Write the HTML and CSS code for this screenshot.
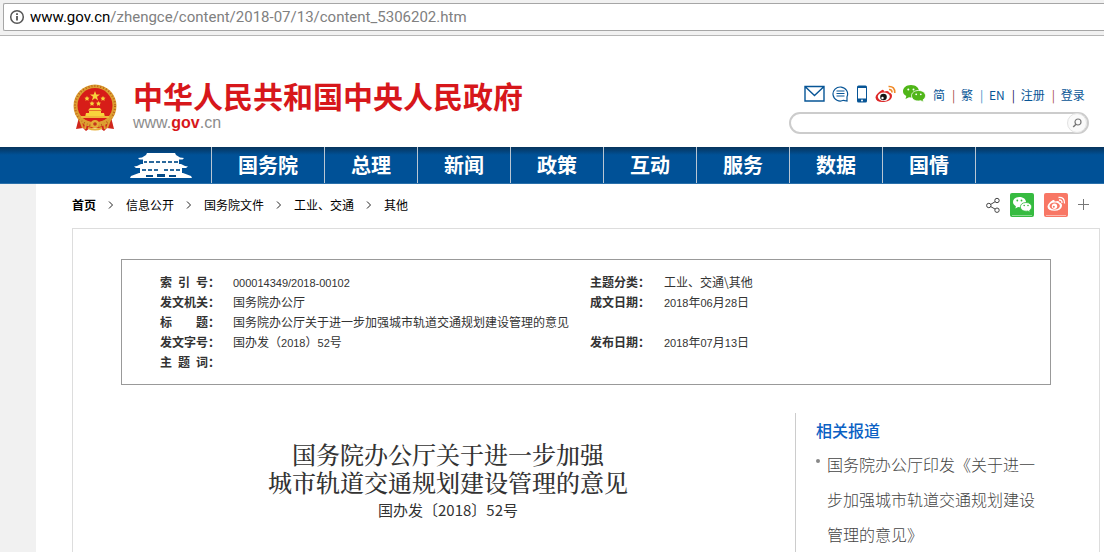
FILE: index.html
```html
<!DOCTYPE html>
<html lang="zh-CN">
<head>
<meta charset="utf-8">
<title>国务院办公厅关于进一步加强城市轨道交通规划建设管理的意见</title>
<link rel="stylesheet" href="styles.css">
</head>
<body>
<div class="toolbar">
  <div class="address">
    <svg width="16" height="16" viewBox="0 0 16 16" aria-hidden="true"><circle cx="8" cy="8" r="6.3" fill="none" stroke="#555" stroke-width="1.5"/><path d="M7.1 7h1.8v4.5H7.1zM7.1 4.3h1.8V6H7.1z" fill="#555"/></svg>
    <span class="url"><span class="host">www.gov.cn</span>/zhengce/content/2018-07/13/content_5306202.htm</span>
  </div>
</div>

<header class="header">
  <a class="brand" href="#">
    <svg class="emblem" width="46" height="48" viewBox="0 0 46 48" aria-hidden="true">
      <path d="M7 33L4 45l7-1 3 3 4-3h10l4 3 3-3 7 1-3-12z" fill="#d0251c"/>
      <circle cx="23" cy="22" r="21.5" fill="#dda032"/>
      <circle cx="23" cy="22" r="20" fill="none" stroke="#b9601b" stroke-width="2" stroke-dasharray="1 2"/>
      <circle cx="23" cy="21.500" r="17.500" fill="#d71d18"/>
      <path d="M23 7l1.300 3.500H28l-3 2.300 1.100 3.700-3.100-2.200-3.100 2.200 1.100-3.700-3-2.300h3.700z" fill="#f8d33c"/>
      <g fill="#f8d33c"><path d="M15 12l.8 1.500 1.700.2-1.200 1.200.3 1.800-1.600-.8-1.600.8.3-1.800-1.200-1.200 1.700-.2z"/><path d="M31 12l.8 1.500 1.700.2-1.200 1.200.3 1.800-1.600-.8-1.600.8.3-1.800-1.200-1.200 1.700-.2z"/><path d="M20 17l.8 1.500 1.700.2-1.200 1.200.3 1.800-1.600-.8-1.600.8.3-1.800-1.200-1.200 1.700-.2z"/><path d="M26.500 17l.8 1.500 1.700.2-1.200 1.200.3 1.800-1.600-.8-1.600.8.3-1.800-1.200-1.200 1.700-.2z"/>
      <path d="M18 24h10l2 2.500H16zM17 27h12v2h3l1 4H13l1-4h3z"/></g>
      <path d="M9 32h28v2H9z" fill="#f0b63a"/>
      <path d="M6 33q17 12 34 0M8 36l3 8M38 36l-3 8M14 39l-1 6M32 39l1 6" fill="none" stroke="#dda032" stroke-width="2"/>
      <circle cx="23" cy="40" r="4" fill="#e6ae37"/><circle cx="23" cy="40" r="1.800" fill="#c2371d"/>
      <path d="M16 44q7 3 14 0" fill="none" stroke="#e6ae37" stroke-width="2"/>
    </svg>
    <span class="brand-text">
      <span class="brand-name">中华人民共和国中央人民政府</span>
      <span class="brand-url">www.<b>gov</b>.cn</span>
    </span>
  </a>
  <div class="tools">
    <div class="quick">
      <a href="#" aria-label="邮箱"><svg width="21" height="18" viewBox="0 0 21 18"><path d="M1 1.500h19v14.500H1zM1.500 2l9 8.500 9-8.500" fill="none" stroke="#075596" stroke-width="1.400"/></svg></a>
      <a href="#" aria-label="留言"><svg width="17" height="18" viewBox="0 0 17 18"><path d="M11.500 15.300A7.300 7 0 1 1 15 11.800V16z" fill="none" stroke="#075596" stroke-width="1.200"/><path d="M4.500 6h8M4.500 8.500h8M4.500 11h8" stroke="#075596"/></svg></a>
      <a href="#" aria-label="客户端"><svg width="12" height="18" viewBox="0 0 12 18"><rect x="1" y=".5" width="10" height="17" rx="1.500" fill="#075596"/><path d="M2 3h8v10.500H2z" fill="#fff"/><circle cx="6" cy="15.500" r="1" fill="#fff"/></svg></a>
      <a href="#" aria-label="微博"><svg width="21" height="18" viewBox="0 0 21 18"><path d="M7 5Q9 4.300 9 6.500q5-1.500 5 1 3 .5 3 3.500 0 5-8 6Q1 17.500.5 12.500.5 9 7 5z" fill="#dd2727"/><ellipse cx="8.800" cy="11.700" rx="6" ry="4.200" fill="#fff"/><circle cx="8.500" cy="12" r="3.300" fill="#151515"/><circle cx="7.500" cy="13" r="1.200" fill="#fff"/><path d="M13.500 1.500q6.500-.5 6.300 6.500M14 4.500q3-.2 3 3" fill="none" stroke="#f08a28" stroke-width="1.600"/></svg></a>
      <a href="#" aria-label="微信"><svg width="23" height="18" viewBox="0 0 23 18"><path d="M8 0c5 0 8 3 8 6.300S13 12.600 8 12.600l-2-.3L2.500 14l.8-3C1 10 0 8.200 0 6.300 0 3 3 0 8 0z" fill="#4fb618"/><path d="M15.500 5.500c4.300 0 7 2.400 7 5.200 0 1.800-1 3.200-2.500 4.100l.5 2.400-2.700-1.500c-6 1.200-9.300-1.800-9.300-5 0-2.800 2.700-5.200 7-5.200z" fill="#4fb618" stroke="#fff" stroke-width=".8"/><g fill="#fff"><circle cx="5.300" cy="4.500" r="1"/><circle cx="10.500" cy="4.500" r="1"/><circle cx="13.200" cy="9.300" r=".9"/><circle cx="17.800" cy="9.300" r=".9"/></g></svg></a>
      <div class="langs">
        <a href="#">简</a><span class="bar warm">|</span><a href="#">繁</a><span class="bar cool">|</span><a href="#">EN</a><span class="bar">|</span><a href="#">注册</a><span class="bar warm">|</span><a href="#">登录</a>
      </div>
    </div>
    <form class="search">
      <input type="text" aria-label="搜索">
      <button type="button" aria-label="搜索"><svg width="10" height="10" viewBox="0 0 10 10"><circle cx="6" cy="4" r="3" fill="none" stroke="#777" stroke-width="1.200"/><path d="M4 6.200L1.200 9" stroke="#777" stroke-width="1.500"/></svg></button>
    </form>
  </div>
</header>

<nav class="nav">
  <a class="gate" href="#" aria-label="中国政府网">
    <svg width="62" height="26" viewBox="0 0 62 26"><g fill="#fff"><path d="M17 0h28l1 2 4 2.500 4 .5-1.500 1.500h-43L8 5l4-.5L16 2z"/><path d="M13 6h36v5H13z"/><path d="M11 11h40l4 2 3 .500-2 1.500H6l-2-1.500 3-.500z"/><path d="M10 15h42v5H10z"/><path d="M9 20h44l8 3 1 2H0l1-2z"/></g><path d="M14 8h3v2h-3zM19 8h5v2h-5zM26 8h4v2h-4zM32 8h4v2h-4zM38 8h4v2h-4zM44 8h4v2h-4zM12 16h4v2h-4zM18 16h4v2h-4zM24 16h4v2h-4zM34 16h4v2h-4zM40 16h4v2h-4zM46 16h4v2h-4z" fill="#2b699c"/><path d="M16 22h7v2h-7zM27 21h8v3h-8zM39 22h7v2h-7z" fill="#034a86"/></svg>
  </a>
  <a href="#">国务院</a><a href="#">总理</a><a href="#">新闻</a><a href="#">政策</a><a href="#">互动</a><a href="#">服务</a><a href="#">数据</a><a href="#">国情</a>
</nav>

<main class="page">
  <div class="path-row">
    <div class="crumbs">
      <a class="home" href="#">首页</a>
      <svg width="6" height="8" viewBox="0 0 6 8"><path d="M1 .5L4.500 4 1 7.500" fill="none" stroke="#222"/></svg>
      <a href="#">信息公开</a>
      <svg width="6" height="8" viewBox="0 0 6 8"><path d="M1 .5L4.500 4 1 7.500" fill="none" stroke="#222"/></svg>
      <a href="#">国务院文件</a>
      <svg width="6" height="8" viewBox="0 0 6 8"><path d="M1 .5L4.500 4 1 7.500" fill="none" stroke="#222"/></svg>
      <a href="#">工业、交通</a>
      <svg width="6" height="8" viewBox="0 0 6 8"><path d="M1 .5L4.500 4 1 7.500" fill="none" stroke="#222"/></svg>
      <a href="#">其他</a>
    </div>
    <div class="share">
      <a href="#" aria-label="分享"><svg width="14" height="16" viewBox="0 0 14 16"><g fill="none" stroke="#444"><circle cx="2.800" cy="8.500" r="2.200"/><circle cx="11" cy="3.500" r="2.200"/><circle cx="11" cy="13.200" r="2.200"/><path d="M4.700 7.400l4.400-2.700M4.700 9.600l4.400 2.500"/></g></svg></a>
      <a href="#" aria-label="分享到微信"><svg width="24" height="24" viewBox="0 0 24 24"><rect width="24" height="24" rx="2" fill="#36bb40"/><path d="M2 22.500h20" stroke="#8bd890"/><path d="M9.500 4c4 0 6.500 2.500 6.500 5s-2.500 5.200-6.500 5.200L8 14l-2.600 1.500.5-2.300C4 12.200 3 10.700 3 9c0-2.500 2.500-5 6.500-5z" fill="#fff"/><path d="M16 9.500c3.500 0 5.700 2 5.700 4.300 0 1.400-.8 2.600-2 3.400l.4 2-2.200-1.200c-4.800.9-7.500-1.600-7.500-4.200 0-2.300 2.100-4.300 5.600-4.300z" fill="#fff" stroke="#36bb40" stroke-width=".8"/><g fill="#36bb40"><circle cx="7.300" cy="7.500" r=".9"/><circle cx="11.500" cy="7.500" r=".9"/><circle cx="14.200" cy="12.500" r=".8"/><circle cx="18" cy="12.500" r=".8"/></g></svg></a>
      <a href="#" aria-label="分享到微博"><svg width="24" height="24" viewBox="0 0 24 24"><rect width="24" height="24" rx="2" fill="#f87765"/><path d="M2 22.500h20" stroke="#fbb8ae"/><path d="M9 7q2-.5 1.700 1.500 4.800-1.500 4.800 1 2.800.8 2.500 3.500-.8 4.500-7.500 4.800-6.800 0-7-4.300Q4 10 9 7z" fill="#fff"/><ellipse cx="10.700" cy="13" rx="5.200" ry="3.500" fill="#f87765"/><circle cx="10.500" cy="13.200" r="2.700" fill="#fff"/><circle cx="9.800" cy="13.800" r="1" fill="#f87765"/><path d="M14.500 4.500q6.500-.5 6 6M15 7q3.200-.2 3 3" fill="none" stroke="#fff" stroke-width="1.300"/></svg></a>
      <a href="#" aria-label="更多"><svg width="11" height="24" viewBox="0 0 11 24"><path d="M5.500 6v11M0 11.500h11" stroke="#777"/></svg></a>
    </div>
  </div>

  <div class="sheet">
    <table class="info">
      <tr><th scope="row"><span class="label">索 引 号</span>：</th><td><span class="num">000014349/2018-00102</span></td><th scope="row"><span class="label">主题分类</span>：</th><td>工业、交通\其他</td></tr>
      <tr><th scope="row"><span class="label">发文机关</span>：</th><td>国务院办公厅</td><th scope="row"><span class="label">成文日期</span>：</th><td><span class="num">2018</span>年<span class="num">06</span>月<span class="num">28</span>日</td></tr>
      <tr><th scope="row"><span class="label">标 题</span>：</th><td colspan="3">国务院办公厅关于进一步加强城市轨道交通规划建设管理的意见</td></tr>
      <tr><th scope="row"><span class="label">发文字号</span>：</th><td>国办发（<span class="num">2018</span>）<span class="num">52</span>号</td><th scope="row"><span class="label">发布日期</span>：</th><td><span class="num">2018</span>年<span class="num">07</span>月<span class="num">13</span>日</td></tr>
      <tr><th scope="row"><span class="label">主 题 词</span>：</th><td colspan="3"></td></tr>
    </table>
    <div class="columns">
      <article class="article">
        <h1>国务院办公厅关于进一步加强<br>城市轨道交通规划建设管理的意见</h1>
        <p>国办发〔2018〕52号</p>
      </article>
      <aside class="related">
        <h2>相关报道</h2>
        <ul><li><a href="#">国务院办公厅印发《关于进一步加强城市轨道交通规划建设管理的意见》</a></li></ul>
      </aside>
    </div>
  </div>
</main>
</body>
</html>
```
FILE: styles.css
```css
* { box-sizing: border-box; }

body {
  margin: 0;
  min-height: 100vh;
  display: flex;
  flex-direction: column;
  background: #fff;
  color: #333;
  font: 12px/20px "Noto Sans CJK SC", sans-serif;
}

a { color: inherit; text-decoration: none; }
svg { display: block; flex: none; }

.toolbar {
  height: 36px;
  padding: 3px 0 0 3px;
  background: #f1f1f1;
  border-bottom: 1px solid #b6b6b6;
}
.address {
  display: flex;
  align-items: center;
  gap: 5px;
  height: 28px;
  padding-left: 5px;
  background: #fff;
  border: 1px solid #a6a6a6;
  border-right: 0;
  border-radius: 2px 0 0 2px;
}
.url { font: 15px/20px Roboto, "Open Sans", sans-serif; color: #808080; }
.host { color: #000; }

.header {
  display: flex;
  justify-content: space-between;
  height: 111px;
  padding: 44px 15px 0 72px;
}
.brand { display: flex; gap: 15px; }
.emblem { margin-top: 4px; }
.brand-text { display: flex; flex-direction: column; }
.brand-name { font-size: 30px; line-height: 30px; font-weight: 700; color: #d7171b; }
.brand-url { font: 16px/26px "Liberation Sans", Arial, sans-serif; color: #8c8c8c; }
.brand-url b { color: #d7171b; }

.tools { width: 300px; padding-top: 4px; }
.quick { display: flex; align-items: center; gap: 7px; height: 20px; padding-left: 15px; color: #075596; }
.langs { display: flex; gap: 7px; height: 20px; line-height: 22px; }
.bar { width: 2px; color: #17174f; }
.warm { color: #a34b43; }
.cool { color: #3c90c8; }
.search {
  display: flex;
  align-items: center;
  height: 22px;
  margin: 8px 0 0;
  border: 2px solid #ccc;
  border-radius: 11px;
}
.search input { flex: 1; min-width: 0; height: 16px; margin-left: 10px; padding: 0; border: 0; outline: 0; background: none; }
.search button {
  display: grid;
  place-items: center;
  width: 20px;
  height: 20px;
  padding: 0;
  border: 1px solid #e2e2e2;
  border-radius: 50%;
  background: #fafafa;
}

.nav {
  display: flex;
  height: 37px;
  padding-left: 130px;
  background: linear-gradient(#07345c, #005197 8px);
  border-bottom: 1px solid #2a70aa;
}
.nav a {
  padding: 0 26px;
  border-right: 1px solid #b9c6d3;
  color: #fff;
  font-size: 20px;
  line-height: 36px;
  font-weight: 700;
}
.nav .gate { padding: 6px 19px 0 0; }

.page { flex: 1; display: flex; flex-direction: column; padding: 0 4px 0 36px; border-left: 36px solid #f1f1f1; }
.path-row { display: flex; justify-content: space-between; height: 44px; padding: 0 11px 2px 0; }
.crumbs { display: flex; align-items: center; gap: 12px; color: #000; }
.home { font-weight: 700; }
.share { display: flex; align-items: center; gap: 10px; }

.sheet { flex: 1; padding: 30px 48px 0; border: 1px solid #ddd; border-bottom: 0; }
.info {
  display: block;
  padding: 12px 38px;
  border: 1px solid #999;
  border-spacing: 0;
}
.info tbody { display: block; }
.info tr { display: grid; grid-template-columns: 73px 357px 74px 1fr; height: 20px; }
.info th, .info td { padding: 0; text-align: left; white-space: nowrap; }
.info td[colspan] { grid-column: 2 / 5; }
.label { display: inline-block; width: 48px; text-align-last: justify; }
.num { font: 11px/16px "Liberation Sans", Arial, sans-serif; }

.columns { display: flex; gap: 20px; padding-top: 28px; }
.article { flex: 1; padding-top: 27px; text-align: center; }
.article h1 { margin: 0; font: 24px/28px "Noto Serif CJK SC", "Noto Sans CJK SC", serif; font-weight: 500; }
.article p { margin: 0; font-size: 15px; line-height: 28px; }
.related { width: 256px; padding-left: 20px; border-left: 1px solid #ccc; }
.related h2 { margin: 0; font-size: 16px; line-height: 34px; font-weight: 500; color: #0b61c4; }
.related ul { margin: 0; padding: 0; list-style: none; }
.related li { display: flex; gap: 7px; padding-right: 8px; font-size: 16px; line-height: 35px; font-weight: 300; color: #444; }
.related li::before { content: ""; flex: none; width: 4px; height: 4px; margin-top: 12px; border-radius: 50%; background: #888; }
```
